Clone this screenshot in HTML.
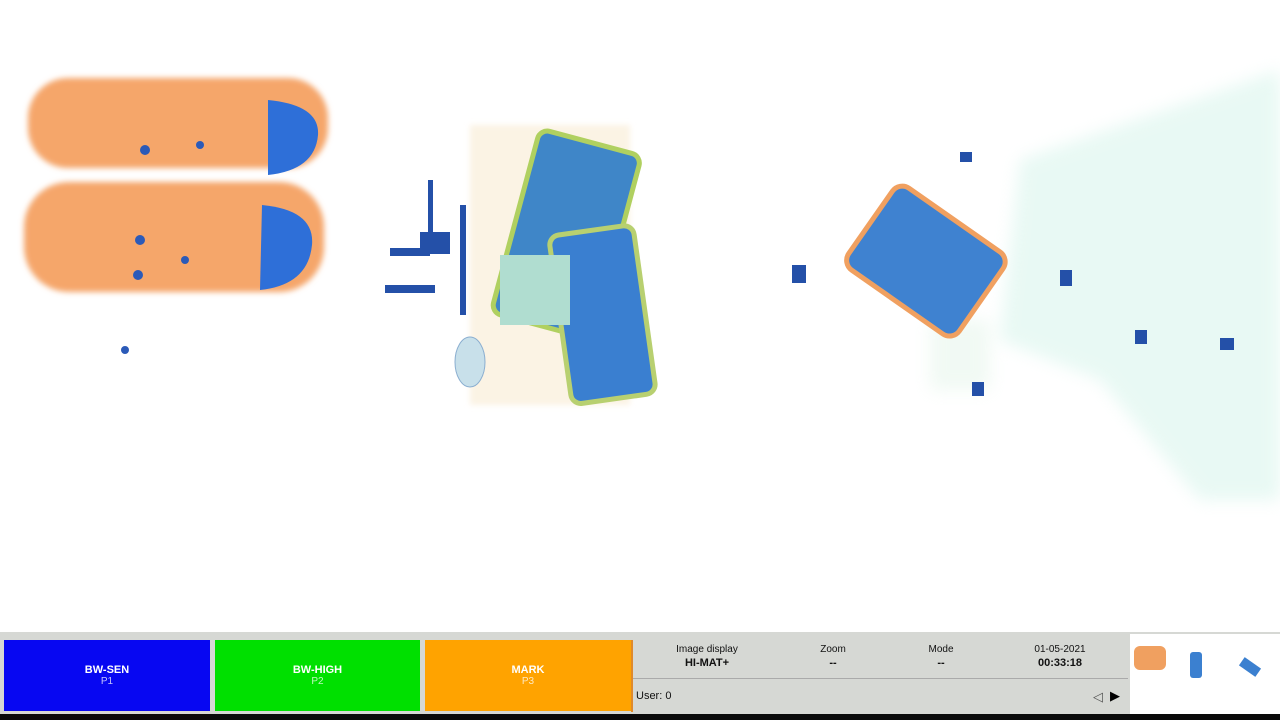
<!DOCTYPE html>
<html><head><meta charset="utf-8"><style>
body{margin:0;width:1280px;height:720px;overflow:hidden;background:#fff;font-family:"Liberation Sans",sans-serif;position:relative}
.bar{position:absolute;left:0;top:632px;width:1280px;height:82px;background:#d6d8d4}
.blk{position:absolute;left:0;top:714px;width:1280px;height:6px;background:#0a0a0a}
.btn{position:absolute;top:640px;height:71px;color:#fff;text-align:center;font-size:11px;font-weight:bold}
.btn span{display:block;font-weight:normal;font-size:10px;opacity:.75}
.lbl{position:absolute;font-size:10px;color:#111;text-align:center;width:90px}
.lbl b{display:block;font-size:11px;margin-top:2px}
</style></head><body>
<svg width="1280" height="632" style="position:absolute;left:0;top:0">
<defs><filter id="b"><feGaussianBlur stdDeviation="3"/></filter><filter id="b2"><feGaussianBlur stdDeviation="8"/></filter></defs>
<g filter="url(#b2)" opacity=".35">
<path d="M1020 160 L1280 70 L1280 500 L1200 500 L1100 380 L1000 340 Z" fill="#bfeee0"/>
<rect x="930" y="320" width="60" height="70" fill="#d8f0e0"/>
</g>
<g filter="url(#b)">
<rect x="28" y="78" width="300" height="90" rx="40" fill="#f5a66a"/>
<rect x="24" y="182" width="300" height="110" rx="45" fill="#f5a66a"/>
</g>
<path d="M268 100 Q320 105 318 135 Q315 170 268 175 Z" fill="#2e6fd8"/>
<path d="M262 205 Q315 210 312 245 Q308 285 260 290 Z" fill="#2e6fd8"/>
<g fill="#2b5ab8"><circle cx="145" cy="150" r="5"/><circle cx="200" cy="145" r="4"/><circle cx="140" cy="240" r="5"/><circle cx="185" cy="260" r="4"/><circle cx="138" cy="275" r="5"/><circle cx="125" cy="350" r="4"/></g>
<rect x="470" y="125" width="160" height="280" fill="#fbf3e4" filter="url(#b)"/>
<g transform="rotate(15 570 230)"><rect x="515" y="140" width="105" height="190" rx="10" fill="#3f86c8" stroke="#b0d060" stroke-width="5"/></g>
<g transform="rotate(-8 600 315)"><rect x="560" y="230" width="85" height="170" rx="10" fill="#3a7fd0" stroke="#b8d070" stroke-width="5"/></g>
<rect x="500" y="255" width="70" height="70" fill="#b0ddd0"/>
<g fill="#2450a8"><rect x="420" y="232" width="30" height="22"/><rect x="390" y="248" width="40" height="8"/><rect x="385" y="285" width="50" height="8"/><rect x="428" y="180" width="5" height="60"/><rect x="460" y="205" width="6" height="110"/></g>
<ellipse cx="470" cy="362" rx="15" ry="25" fill="#c8e0ea" stroke="#8aaed0"/>
<g transform="rotate(35 925 258)"><rect x="860" y="210" width="135" height="100" rx="12" fill="#3f82d0" stroke="#f0a060" stroke-width="5"/></g>
<g fill="#2450a8"><rect x="792" y="265" width="14" height="18"/><rect x="1060" y="270" width="12" height="16"/><rect x="1135" y="330" width="12" height="14"/><rect x="1220" y="338" width="14" height="12"/><rect x="972" y="382" width="12" height="14"/><rect x="960" y="152" width="12" height="10"/></g>
</svg>
<div class="bar"></div><div class="blk"></div>
<div class="btn" style="left:4px;width:206px;background:#0707f2"><div style="margin-top:24px">BW-SEN<span>P1</span></div></div>
<div class="btn" style="left:215px;width:205px;background:#00e000"><div style="margin-top:24px">BW-HIGH<span>P2</span></div></div>
<div class="btn" style="left:425px;width:206px;background:#ffa300"><div style="margin-top:24px">MARK<span>P3</span></div></div>
<div style="position:absolute;left:631px;top:640px;width:2px;height:72px;background:#e08a2a"></div>
<div style="position:absolute;left:633px;top:678px;width:495px;height:1px;background:#aaa"></div>
<div class="lbl" style="left:662px;top:644px">Image display<b>HI-MAT+</b></div>
<div class="lbl" style="left:788px;top:644px">Zoom<b>--</b></div>
<div class="lbl" style="left:896px;top:644px">Mode<b>--</b></div>
<div class="lbl" style="left:1015px;top:644px">01-05-2021<b>00:33:18</b></div>
<div style="position:absolute;left:636px;top:690px;font-size:11px;color:#111">User: 0</div>
<div style="position:absolute;left:1093px;top:689px;font-size:13px;color:#555">◁</div>
<div style="position:absolute;left:1110px;top:688px;font-size:13px;color:#000">▶</div>
<div style="position:absolute;left:1130px;top:634px;width:150px;height:80px;background:#fff">
<div style="position:absolute;left:4px;top:12px;width:32px;height:24px;background:#f0a060;border-radius:6px"></div>
<div style="position:absolute;left:60px;top:18px;width:12px;height:26px;background:#3b80d0;border-radius:3px"></div>
<div style="position:absolute;left:110px;top:28px;width:20px;height:10px;background:#3b80d0;transform:rotate(35deg)"></div>
</div>
</body></html>
